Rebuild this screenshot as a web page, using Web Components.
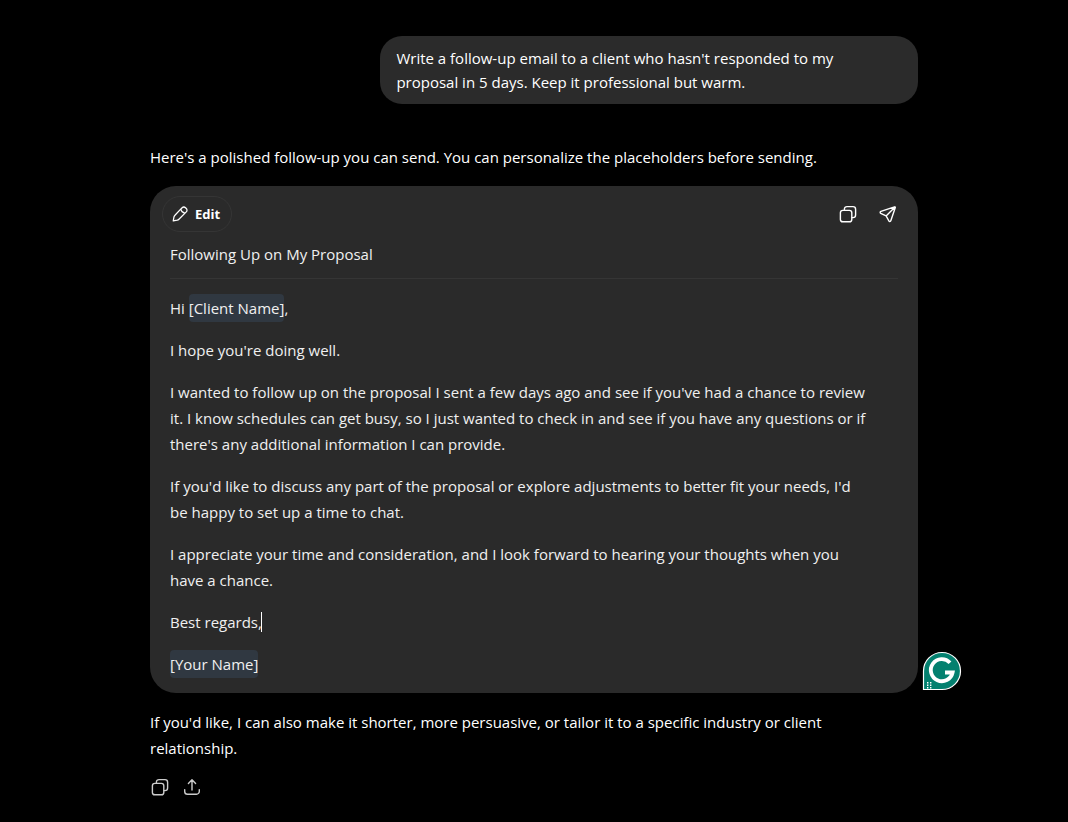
<!DOCTYPE html>
<html lang="en">
<head>
<meta charset="utf-8">
<meta name="viewport" content="width=device-width, initial-scale=1">
<title>Follow-up email</title>
<style>
html{background:#000}
body{margin:0;background:#000;color:#fff;font-family:"Segoe UI","Open Sans","Noto Sans",sans-serif;font-size:15px;font-weight:500;line-height:26px}
</style>
</head>
<body>
<chat-thread>
  <user-message>Write a follow-up email to a client who hasn't responded to my proposal in 5 days. Keep it professional but warm.</user-message>
  <assistant-message>
    <assistant-text>Here's a polished follow-up you can send. You can personalize the placeholders before sending.</assistant-text>
    <email-card subject="Following Up on My Proposal">
      <email-line>Hi <place-holder>[Client Name]</place-holder>,</email-line>
      <email-line>I hope you're doing well.</email-line>
      <email-line>I wanted to follow up on the proposal I sent a few days ago and see if you've had a chance to review it. I know schedules can get busy, so I just wanted to check in and see if you have any questions or if there's any additional information I can provide.</email-line>
      <email-line>If you'd like to discuss any part of the proposal or explore adjustments to better fit your needs, I'd be&nbsp;happy to set up a time to chat.</email-line>
      <email-line>I appreciate your time and consideration, and I look forward to hearing your thoughts when you have a chance.</email-line>
      <email-line>Best regards,<text-caret></text-caret></email-line>
      <email-line><place-holder>[Your Name]</place-holder></email-line>
      <writing-badge slot="badge"></writing-badge>
    </email-card>
    <assistant-text>If you'd like, I can also make it shorter, more persuasive, or tailor it to a specific industry or client relationship.</assistant-text>
    <message-actions></message-actions>
  </assistant-message>
</chat-thread>
<script>
const icons = {
  copy: '<rect x="2.4" y="6.4" width="11.4" height="11.4" rx="2.4"/><path d="M6.4 6.2V5.2a2.6 2.6 0 0 1 2.6-2.6h6a2.6 2.6 0 0 1 2.6 2.6v5.8a2.6 2.6 0 0 1-2.6 2.6h-1"/>',
  send: '<path d="M16.5 2.8 2.9 7.4c-.9.3-1 1.5-.2 1.9l5.4 2.6 2.8 5.1c.4.8 1.6.7 1.9-.2l4.5-13.2c.2-.5-.3-1-.8-.8ZM8.1 11.9l8.7-8.7"/>',
  pencil: '<path d="m11.3 4.1 1.1-1.1a2.6 2.6 0 0 1 3.7 0l.9.9a2.6 2.6 0 0 1 0 3.7l-8.2 8.2a4 4 0 0 1-1.9 1.1l-4.4.8.8-4.4a4 4 0 0 1 1.1-1.9l6.9-7.3ZM11 4.7c.4 2.4 1.8 3.8 4.3 4.4"/>',
  share: '<path d="M10 13V3M6.4 6.4 10 2.8l3.6 3.6M2.7 12.6v1.8a2.8 2.8 0 0 0 2.8 2.8h9a2.8 2.8 0 0 0 2.8-2.8v-1.8"/>'
};
function define(name, markup, setup) {
  const template = document.createElement('template');
  template.innerHTML = markup;
  customElements.define(name, class extends HTMLElement {
    constructor() {
      super();
      this.attachShadow({mode: 'open'}).append(template.content.cloneNode(true));
    }
    connectedCallback() { if (setup) setup(this); }
  });
}
define('line-icon', '<style>:host{display:block;width:20px;height:20px}svg{display:block;width:100%;height:100%;fill:none;stroke:currentColor;stroke-width:1.4;stroke-linecap:round;stroke-linejoin:round}</style><svg viewBox="0 0 20 20" aria-hidden="true"></svg>',
  el => { el.shadowRoot.querySelector('svg').innerHTML = icons[el.getAttribute('name')]; });
define('chat-thread', '<style>:host{display:block;box-sizing:border-box;max-width:800px;margin:0 auto;padding:36px 16px 20px}</style><slot></slot>');
define('user-message', '<style>:host{display:flex;justify-content:flex-end}div{box-sizing:border-box;width:70%;padding:10px 40px 10px 16px;border-radius:22px;background:#2b2b2b;line-height:24px}</style><div><slot></slot></div>');
define('assistant-message', '<style>:host{display:flex;flex-direction:column;gap:16px;margin-top:40px}</style><slot></slot>');
define('assistant-text', '<style>:host{display:block;padding-right:20px}</style><slot></slot>');
define('email-line', '<style>:host{display:block}</style><slot></slot>');
define('place-holder', '<style>:host{display:inline;padding:4px 0;border-radius:4px;background:#303841}</style><slot></slot>');
define('text-caret', '<style>:host{display:inline-block;width:1px;height:20px;vertical-align:-4px;margin:0 -1px;background:#fff}</style>');
define('email-card', `<style>
:host{display:block;position:relative;box-sizing:border-box;padding:10px 20px 16px;border-radius:26px;background:#2a2a2a;color:#f0f0f0}
header{display:flex;justify-content:space-between;align-items:center;margin:0 -8px}
nav{display:flex;gap:4px}
button{font:inherit;color:#fff;background:none;border:0;margin:0;padding:0}
.edit{display:flex;align-items:center;box-sizing:border-box;height:36px;padding:0 11px 0 8px;gap:6px;border:1px solid #353535;border-radius:18px;font-size:13px;font-weight:700}
.edit line-icon{width:18px;height:18px}
.icon{display:grid;place-items:center;width:36px;height:36px}
input{display:block;box-sizing:border-box;width:100%;height:47px;margin:0;padding:0 0 3px;border:0;border-bottom:1px solid #353535;background:none;color:inherit;font:inherit;outline:0}
article{display:flex;flex-direction:column;gap:16px;padding:16px 24px 0 0}
</style>
<header><button class="edit" type="button"><line-icon name="pencil"></line-icon>Edit</button><nav><button class="icon" type="button" aria-label="Copy"><line-icon name="copy"></line-icon></button><button class="icon" type="button" aria-label="Send"><line-icon name="send"></line-icon></button></nav></header>
<input type="text" aria-label="Subject">
<article><slot></slot></article><slot name="badge"></slot>`,
  el => { el.shadowRoot.querySelector('input').value = el.getAttribute('subject'); });
define('message-actions', '<style>:host{display:flex;gap:12px;color:#ccc}button{display:block;padding:0;margin:0;border:0;background:none;color:inherit}</style><button type="button" aria-label="Copy reply"><line-icon name="copy"></line-icon></button><button type="button" aria-label="Share"><line-icon name="share"></line-icon></button>');
define('writing-badge', `<style>:host{position:absolute;right:-44px;bottom:2px;width:40px;height:40px}button{display:block;width:100%;height:100%;padding:0;border:0;background:none}svg{display:block}</style>
<button type="button" aria-label="Writing assistant"><svg width="40" height="40" viewBox="0 0 40 40"><path d="M1.5 38.5V20A18.5 18.5 0 1 1 20 38.5Z" fill="#03806f" stroke="#fff" stroke-width="1.2"/><path d="M28 11.8A11 11 0 1 0 30.6 21.5H23M31.8 21.5h-4" fill="none" stroke="#fff" stroke-width="3.8"/><path d="M5 31h1.4v1.4H5zM8 31h1.4v1.4H8zM5 33.5h1.4v1.4H5zM8 33.5h1.4v1.4H8zM5 36h1.4v1.4H5zM8 36h1.4v1.4H8z" fill="#fff"/></svg></button>`);
</script>
</body>
</html>
